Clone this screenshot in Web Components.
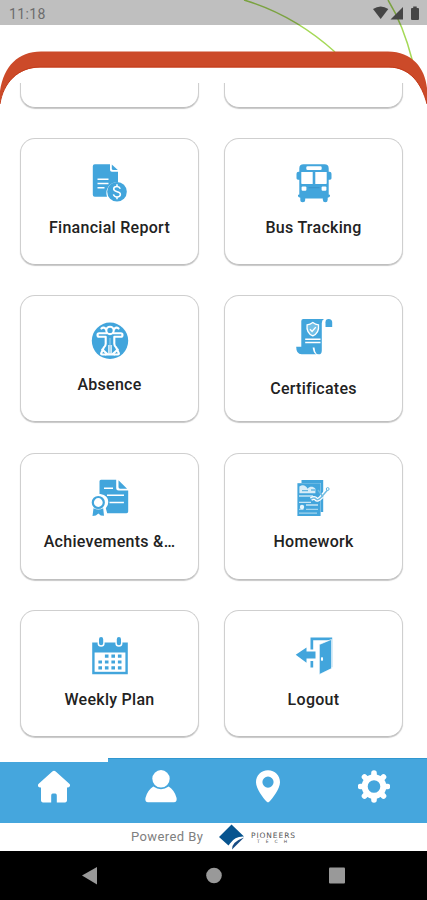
<!DOCTYPE html>
<html lang="en">
<head>
<meta charset="utf-8">
<meta name="viewport" content="width=device-width, initial-scale=1">
<title>School Menu</title>
<style>
  html, body { margin: 0; height: 900px; overflow: hidden; background: #fff; }
  body { font-family: Roboto, "Liberation Sans", sans-serif; }
</style>
</head>
<body>
<school-app>
  <status-bar slot="status" time="11:18"></status-bar>
  <menu-grid>
    <menu-card></menu-card>
    <menu-card></menu-card>
    <menu-card icon="finance" label="Financial Report"></menu-card>
    <menu-card icon="bus" label="Bus Tracking"></menu-card>
    <menu-card icon="absence" label="Absence"></menu-card>
    <menu-card icon="certificate" label="Certificates" style="--icon-top: 21px; --label-gap: 22px"></menu-card>
    <menu-card icon="achievement" label="Achievements &amp;…" style="--label-gap: 14px"></menu-card>
    <menu-card icon="homework" label="Homework" style="--label-gap: 14px"></menu-card>
    <menu-card icon="calendar" label="Weekly Plan" style="--icon-top: 25px; --label-gap: 14px"></menu-card>
    <menu-card icon="logout" label="Logout" style="--icon-top: 25px; --label-gap: 14px"></menu-card>
  </menu-grid>
  <tab-bar slot="bottom">
    <tab-item icon="home" active></tab-item>
    <tab-item icon="user"></tab-item>
    <tab-item icon="pin"></tab-item>
    <tab-item icon="gear"></tab-item>
  </tab-bar>
  <powered-by slot="bottom">Powered By</powered-by>
  <system-nav slot="bottom"></system-nav>
</school-app>

<script>
const ICONS = {
  finance: `
    <path d="M4.8 1.3H20v5.5q0 2 2 2h6v10.4a10.8 10.8 0 0 0-11 14.5H4.8q-2 0-2-2V3.3q0-2 2-2z"/>
    <path d="M21.8 1.5l6 5.6h-4.4q-1.6 0-1.6-1.6z"/>
    <path d="M7.500 16.200h11M7.500 20.500h11M7.500 24.800h7" stroke="#fff" stroke-width="1.400"/>
    <circle cx="27" cy="28.700" r="9.800"/>
    <path d="M30.300 25.700c-.6-1.500-1.700-2.100-3.300-2.100-2 0-3.300 1-3.300 2.500 0 3.600 6.700 1.700 6.700 5.200 0 1.700-1.400 2.600-3.400 2.600s-3.200-.9-3.600-2.500M27 21.300v2.400M27 33.800v2.400" fill="none" stroke="#fff" stroke-width="1.500"/>`,
  bus: `
    <path d="M9.5 1.2h21q4.2 0 4.2 4.2V8.7h.8q2 0 2 2v4.6q0 1.400-1.500 1.400h-1.300v14.800q1.400 0 1.400 1.300 0 1.600-2.400 1.900v2q0 2.500-2.400 2.500t-2.500-2.500v-1.300H11.200v1.300q0 2.500-2.500 2.500t-2.400-2.500v-2q-2.400-.3-2.400-1.900 0-1.300 1.400-1.300V16.700H4q-1.500 0-1.500-1.400v-4.600q0-2 2-2h.8V5.400q0-4.200 4.200-4.200z"/>
    <path d="M13.600 3.300h12.800q1.300 0 1.300 1.200v1.200q0 1.200-1.300 1.200H13.600q-1.300 0-1.300-1.200V4.500q0-1.200 1.300-1.200zM7.300 9.100h11.400v12H8.500q-1.200 0-1.200-1.200zM21.300 9.100h11.400v10.800q0 1.200-1.200 1.200H21.300z" fill="#fff"/>
    <rect x="7.600" y="23.600" width="4.800" height="4.200" rx="1" fill="#fff"/>
    <rect x="27.600" y="23.600" width="4.800" height="4.200" rx="1" fill="#fff"/>
    <path d="M14.500 24.700h11" stroke="#3488bd" stroke-width=".6"/>`,
  absence: `
    <circle cx="20" cy="20.800" r="18.200"/>
    <g fill="none" stroke="#fff" stroke-width="2.100" stroke-linejoin="round" stroke-linecap="round">
      <circle cx="20" cy="10.400" r="3.700"/>
      <path d="M15.800 9.200c-1.300-2-3-2-4.400-.6M24.200 9.200c1.300-2 3-2 4.400-.6"/>
      <path d="M16.700 13.200H9.200q-1.700 0-1.700 1.800t1.700 1.800h6.500v6.900q0 2.500-2 4l-2.500 5.500q-.5 1.300 1 1.300h3.300M23.300 13.200h7.500q1.700 0 1.700 1.800t-1.700 1.800h-6.500v6.900q0 2.500 2 4l2.500 5.500q.5 1.300-1 1.300h-3.300"/>
      <path d="M15.700 34.500h8.600M12.300 29.500l5 4.500M27.700 29.500l-5 4.500"/>
    </g>
    <path d="M18 25h4v9h-4z" fill="#fff" opacity=".75"/>
    <path d="M20 18v15" stroke="#9bd0ec" stroke-width="1"/>`,
  certificate: `
    <path d="M9.300 2H30q-2.200 1-2.200 4.200v27.200q0 3.900-3.200 3.900-2.600 0-3.400-2.800l-.7-4H7.300V4q0-2 2-2z"/>
    <path d="M31.500 10V5.200Q31.500 2 34.600 2q3.600 0 3.600 3.500V10z"/>
    <path d="M2.200 29.700h16.400q.4 5.800 3.500 7.600H7.600q-5.400 0-5.400-7.600z"/>
    <path d="M18.800 5.600q2.600 2 5.700 2.200 1 8-5.700 11.100-6.800-3.100-5.700-11.100 3.100-.2 5.700-2.200z" fill="#73c0e7" stroke="#fff" stroke-width="1.300"/>
    <path d="M16 12.200l2.100 2.200 3.700-4.300" fill="none" stroke="#fff" stroke-width="1.400"/>
    <path d="M11.200 22.200h15.300M11.200 25.500h15.300" stroke="#fff" stroke-width="1.400"/>`,
  achievement: `
    <path d="M11 1.700h15.200v8.400q0 2.500 2.500 2.500h9.500v21q0 1.700-1.700 1.700H17.200l-1.400-5q2.500-2.600 2.500-6.200 0-7-7.800-8.200h-1V3.300q0-1.600 1.500-1.600z"/>
    <path d="M28.500 2.300l8.600 8.400h-7q-1.600 0-1.600-1.600z"/>
    <path d="M14 10.300h9M17 17.300h17M19.500 24.500h14.400" stroke="#fff" stroke-width="1.600"/>
    <circle cx="8.300" cy="24.500" r="5.500" fill="#fff" stroke="#42a5dc" stroke-width="2.200"/>
    <path d="M3.500 30.300q5 2.400 9.700 0l.8 7.500-3.200-.4-2.400-1.800-2.600 2-3.300.3z"/>`,
  homework: `
    <path d="M7.500 2h21.700v32h-2.500V5H7.500z"/>
    <path d="M3.400 5.200h23.200V38H3.400z"/>
    <path d="M5.400 8.500c3-2.400 6.500-1.500 8.200 2.200 2.300-2.500 5.300-2.400 7.800 0v4.500H5.400z" fill="#fff" opacity=".8"/>
    <path d="M8 12.600h6M17 12h4" stroke="#67b8e0" stroke-width="1.400"/>
    <path d="M5 18h14M5 24.400h12M12 27h12" stroke="#c5e5f4" stroke-width="1.400"/>
    <path d="M5 31.300h4.500M12 31.300h12M5 35.200h18" stroke="#a4d5ed" stroke-width="1.200"/>
    <circle cx="8" cy="29" r="2.200" fill="#e7f6fc"/>
    <path d="M17 21q3.500-2 5 0t5-1.600l7-8" fill="none" stroke="#fff" stroke-width="4"/>
    <path d="M17 21q3.500-2 5 0t5-1.600l7-8M24 12l5 7" fill="none" stroke="#6fbce3" stroke-width="1.500"/>
    <circle cx="33.700" cy="11" r="1.400" fill="#fff" stroke="#62b6df"/>`,
  calendar: `
    <path d="M2.200 6.500h35.600V38.200H2.200z"/>
    <path d="M4.600 16.500h30.800v19.300H4.600z" fill="#fff"/>
    <path d="M7.600 3.700q0-2.600 3.500-2.600t3.500 2.600v4q0 3-3.500 3t-3.500-3zM25.400 3.700q0-2.600 3.500-2.600t3.500 2.600v4q0 3-3.500 3t-3.500-3z" fill="#fff"/>
    <path d="M11.100 3.200v4M28.900 3.200v4" stroke="#42a5dc" stroke-width="4.200" stroke-linecap="round"/>
    <path d="M14.900 20.200h17.500M8.400 26H32.400M8.400 31.800H32.400" stroke="#42a5dc" stroke-width="3.200" stroke-dasharray="3.600 2.900"/>`,
  logout: `
    <path d="M16.500 1.500h21.700v29.800h-3V4.300H19.200v9.300h-2.700zM16.500 25h2.700v6.500h-2.700z"/>
    <path d="M1.700 18.700L12.500 11.500v4h9v7h-9v4.200z"/>
    <path d="M37.500 3.400v29.200L25.300 38.500V8.500z" stroke="#fff" stroke-width=".7"/>
    <ellipse cx="28" cy="23" rx="1.100" ry="1.900" fill="#fff"/>`,
  home: `
    <path d="M14.300 1.500q1.700-1.500 3.400 0l13.600 12.300q1.500 1.500.3 2.700-.7.900-2 .9H29v13.200q0 1.800-1.800 1.800h-8.400v-7q0-1.800-1.500-1.800h-2.600q-1.500 0-1.500 1.800v7H4.800Q3 32.400 3 30.600V17.400h-.7q-1.300 0-2-.9-1.200-1.200.4-2.700z"/>`,
  user: `
    <circle cx="16" cy="8.800" r="8.700"/>
    <path d="M8.300 16.600q7.700 5.200 15.400 0Q29.200 20 31.500 27.700q.8 4.600-2.500 4.600H3q-3.300 0-2.500-4.600Q2.800 20 8.300 16.600z"/>`,
  pin: `
    <path fill-rule="evenodd" d="M16 .3c7 0 12 5.200 12 12 0 6.500-7.200 15.700-10.500 19.300q-1.500 1.600-3 0C11.200 28 4 18.800 4 12.300 4 5.500 9 .3 16 .3zm0 6.200a5.600 5.600 0 1 0 0 11.200 5.600 5.600 0 0 0 0-11.200z"/>`,
  gear: `
    <circle cx="16" cy="16.500" r="9.300" fill="none" stroke="#fff" stroke-width="6"/>
    <path d="M16 3v3M16 27v3M2.500 16.500h3M26.500 16.500h3M6.500 7l2 2M23.500 24l2 2M6.500 26l2-2M23.500 9l2-2" stroke="#fff" stroke-width="5.600" stroke-linecap="round"/>`
};

class SchoolApp extends HTMLElement {
  constructor() {
    super();
    this.attachShadow({ mode: 'open' }).innerHTML = `
      <style>
        :host {
          display: grid;
          width: 427px;
          height: 900px;
          grid-template-rows: 25px 58px 675px 142px;
          grid-template-columns: 427px;
          overflow: hidden;
          background: #fff;
        }
        .art { grid-area: 1 / 1 / 4 / 2; width: 427px; height: 120px; }
        .status { grid-area: 1 / 1; }
        .content { grid-area: 3 / 1; overflow: hidden; }
        .bottom { grid-area: 4 / 1; display: flex; flex-direction: column; }
      </style>
      <svg class="art" viewBox="0 0 427 120" fill="none">
        <path d="M244 0Q294 15 335 52M388 0Q403 24 412.500 61" stroke="#a5d957" stroke-width="1.500"/>
        <path d="M0 104V91C4 66 18 51.500 41 51.500H388C412 51.500 425 68 427 88V104C422 84 410 67.500 389 67.500H40C18 67.500 3 83 0 104Z" fill="#cc4a29"/>
        <path d="M427 104C422 84 410 67 389 67H40C18 67 3 83 0 104" stroke="#c33b1a"/>
      </svg>
      <div class="status"><slot name="status"></slot></div>
      <div class="content"><slot></slot></div>
      <div class="bottom"><slot name="bottom"></slot></div>
    `;
  }
}
customElements.define('school-app', SchoolApp);

class StatusBar extends HTMLElement {
  constructor() {
    super();
    this.attachShadow({ mode: 'open' }).innerHTML = `
      <style>
        :host {
          display: flex;
          justify-content: space-between;
          align-items: center;
          box-sizing: border-box;
          height: 25px;
          padding: 2px 6px 0 9px;
          background: rgba(0, 0, 0, .25);
          color: #6c6c6c;
          font-size: 14px;
          letter-spacing: .35px;
        }
      </style>
      <span>${this.getAttribute('time')}</span>
      <svg width="48" height="16" viewBox="0 0 48 16" fill="#454545">
        <path d="M0 3Q7.700-2 15.300 3L7.700 13z"/>
        <path d="M17.500 13.500H30V1z"/>
        <path d="M38 3q0-1 1-1h1.200V.5h3.500V2H45q1 0 1 1v9.700q0 1.300-1 1.300h-6q-1 0-1-1.300z"/>
      </svg>
    `;
  }
}
customElements.define('status-bar', StatusBar);

class MenuGrid extends HTMLElement {
  constructor() {
    super();
    this.attachShadow({ mode: 'open' }).innerHTML = `
      <style>
        :host {
          display: grid;
          grid-template-columns: 179px 179px;
          grid-auto-rows: 127px;
          gap: 30.400px 25px;
          margin-top: -102.500px;
          padding-left: 20px;
        }
      </style>
      <slot></slot>
    `;
  }
}
customElements.define('menu-grid', MenuGrid);

class MenuCard extends HTMLElement {
  constructor() {
    super();
    const icon = this.getAttribute('icon');
    this.attachShadow({ mode: 'open' }).innerHTML = `
      <style>
        :host {
          display: flex;
          flex-direction: column;
          align-items: center;
          box-sizing: border-box;
          padding-top: var(--icon-top, 24px);
          border: 1px solid #cfcfcf;
          border-bottom-color: #bfbfbf;
          border-radius: 15px;
          background: #fff;
          box-shadow: 0 1px 1px rgba(0, 0, 0, .22);
        }
        svg { flex: none; fill: #42a5dc; }
        span {
          margin-top: var(--label-gap, 15px);
          color: #222;
          font-size: 16px;
          font-weight: 500;
          line-height: 20px;
          letter-spacing: .28px;
          white-space: nowrap;
        }
      </style>
      ${icon ? `<svg width="40" height="40" viewBox="0 0 40 40">${ICONS[icon]}</svg>
      <span>${this.getAttribute('label')}</span>` : ''}
    `;
  }
}
customElements.define('menu-card', MenuCard);

class TabBar extends HTMLElement {
  constructor() {
    super();
    this.attachShadow({ mode: 'open' }).innerHTML = `
      <style>
        :host {
          display: grid;
          grid-template-columns: 107.500px repeat(3, 1fr);
          height: 64.500px;
          background: #45a6dd;
        }
      </style>
      <slot></slot>
    `;
  }
}
customElements.define('tab-bar', TabBar);

class TabItem extends HTMLElement {
  constructor() {
    super();
    this.attachShadow({ mode: 'open' }).innerHTML = `
      <style>
        :host {
          display: flex;
          justify-content: center;
          box-sizing: border-box;
          padding: 11px 0 0 1px;
          border-top: 1px solid #3097d0;
        }
        :host([active]) { padding-top: 8px; border-top: 4px solid #fff; }
        svg { fill: #fff; }
      </style>
      <svg width="32" height="33" viewBox="0 0 32 33">${ICONS[this.getAttribute('icon')]}</svg>
    `;
  }
}
customElements.define('tab-item', TabItem);

class PoweredBy extends HTMLElement {
  constructor() {
    super();
    this.attachShadow({ mode: 'open' }).innerHTML = `
      <style>
        :host {
          display: flex;
          align-items: center;
          box-sizing: border-box;
          height: 28.500px;
          padding-left: 131px;
          background: #fff;
          color: #808080;
          font-size: 13px;
          line-height: 16px;
        }
        .text { width: 88px; letter-spacing: .4px; white-space: nowrap; }
        .brand {
          display: flex;
          flex-direction: column;
          margin: 3px 0 0 7px;
          color: #555;
          font: 7.500px/7px "DejaVu Sans", sans-serif;
        }
        .brand span { width: 47px; letter-spacing: .9px; white-space: nowrap; }
        .brand .sub { font-size: 4.500px; line-height: 5px; letter-spacing: 6px; text-indent: 6px; }
      </style>
      <span class="text"><slot></slot></span>
      <svg width="25" height="26" viewBox="0 0 25 26">
        <path d="M12.500.5L25 12.500Q16 12 11 19.500L9.500 21.500 0 13z" fill="#07548f"/>
        <path d="M25 13.500L13 25.500Q12.500 18 25 13.500z" fill="#174b83"/>
      </svg>
      <div class="brand"><span>PIONEERS</span><span class="sub">TECH</span></div>
    `;
  }
}
customElements.define('powered-by', PoweredBy);

class SystemNav extends HTMLElement {
  constructor() {
    super();
    this.attachShadow({ mode: 'open' }).innerHTML = `
      <style>
        :host { display: block; height: 49px; background: #000; }
        svg { display: block; }
      </style>
      <svg width="427" height="49" viewBox="0 0 427 49" fill="#999">
        <path d="M82 24.500L97 16v17.500z"/>
        <circle cx="214" cy="24.500" r="7.800"/>
        <rect x="329" y="16.500" width="16" height="16" rx="1"/>
      </svg>
    `;
  }
}
customElements.define('system-nav', SystemNav);
</script>
</body>
</html>
